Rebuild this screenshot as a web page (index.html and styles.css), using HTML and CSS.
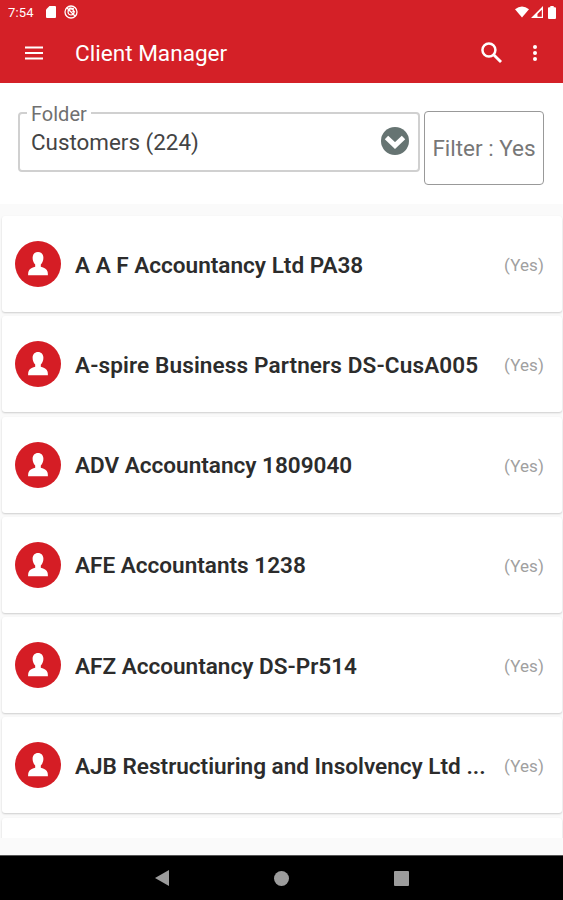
FILE: index.html
```
<!DOCTYPE html>
<html lang="en">
<head>
    <meta charset="UTF-8">
    <meta name="viewport" content="width=device-width, initial-scale=1.0">
    <title>Client Manager</title>
    <link rel="stylesheet" href="styles.css">
</head>
<body>
    <!-- Person icon shared by all rows -->
    <svg class="defs" width="0" height="0">
        <symbol id="person" viewBox="0 0 46 46">
            <circle cx="23" cy="23" r="23" fill="#d51d25"/>
            <path fill="#fff" d="M23 11c-3.300 0-5.400 2.400-5.400 5.800 0 2.900 1 5.200 2.600 6.600v2.400c-3.300.9-6 2.400-6.700 4.600-.3 1-.4 2.600-.4 3.800h19.800c0-1.200-.1-2.800-.4-3.800-.7-2.200-3.400-3.700-6.700-4.600v-2.400c1.600-1.400 2.600-3.700 2.600-6.600 0-3.400-2.100-5.800-5.400-5.800z"/>
        </symbol>
    </svg>

    <div class="screen">
        <header class="header">
            <div class="status">
                <span class="time">7:54</span>
                <svg class="sd" width="10" height="12" viewBox="0 0 10 12"><path fill="#fff" d="M3.500 0H9a1 1 0 0 1 1 1v10a1 1 0 0 1-1 1H1a1 1 0 0 1-1-1V3.500z"/></svg>
                <svg class="sync" width="14" height="14" viewBox="0 0 14 14" fill="none" stroke="#fff"><circle cx="7" cy="7" r="6" stroke-width="1.300"/><circle cx="7" cy="7" r="3" stroke-width="1.200"/><path stroke-width="1.300" d="M3 3l8 8M4 6l2-3 4 1M8 6l3 1"/></svg>
                <span class="spacer"></span>
                <svg class="wifi" width="14" height="12" viewBox="0 0 15 12"><path fill="#fff" d="M0 3Q7.500-3 15 3L7.500 12z"/></svg>
                <svg class="signal" width="12" height="12" viewBox="0 0 13 13"><path fill="#fff" fill-rule="evenodd" d="M13 0v13H0zM11.700 4L7 8.700v3h4.700z"/></svg>
                <svg class="battery" width="8" height="13" viewBox="0 0 8 13"><path fill="#fff" d="M2.300 0h3.400v1.300H7a1 1 0 0 1 1 1V12a1 1 0 0 1-1 1H1a1 1 0 0 1-1-1V2.300a1 1 0 0 1 1-1h1.300z"/></svg>
            </div>
            <div class="toolbar">
                <svg class="menu" width="18" height="14" viewBox="0 0 18 14"><path stroke="#fff" stroke-width="1.900" d="M0 1.500h18M0 7h18M0 12.500h18"/></svg>
                <h1>Client Manager</h1>
                <svg class="search" width="21" height="21" viewBox="0 0 22 22" fill="none" stroke="#fff"><circle cx="8.300" cy="8.300" r="6.800" stroke-width="2.600"/><path stroke-width="3" d="M13 13l8 8"/></svg>
                <svg class="more" width="4" height="16" viewBox="0 0 4 16" fill="#fff"><circle cx="2" cy="2" r="2"/><circle cx="2" cy="8" r="2"/><circle cx="2" cy="14" r="2"/></svg>
            </div>
        </header>

        <section class="filters">
            <fieldset class="folder">
                <legend>Folder</legend>
                <span>Customers (224)</span>
                <svg width="28" height="28" viewBox="0 0 28 28"><circle cx="14" cy="14" r="14" fill="#667472"/><path fill="none" stroke="#fff" stroke-width="5" d="M5.500 10.500l8.500 8 8.500-8"/></svg>
            </fieldset>
            <button class="filter" type="button">Filter : Yes</button>
        </section>

        <main class="list">
            <div class="card"><svg class="avatar"><use href="#person"/></svg><span class="name">A A F Accountancy Ltd PA38</span><span class="flag">(Yes)</span></div>
            <div class="card"><svg class="avatar"><use href="#person"/></svg><span class="name wide">A-spire Business Partners DS-CusA005</span><span class="flag">(Yes)</span></div>
            <div class="card"><svg class="avatar"><use href="#person"/></svg><span class="name">ADV Accountancy 1809040</span><span class="flag">(Yes)</span></div>
            <div class="card"><svg class="avatar"><use href="#person"/></svg><span class="name">AFE Accountants 1238</span><span class="flag">(Yes)</span></div>
            <div class="card"><svg class="avatar"><use href="#person"/></svg><span class="name">AFZ Accountancy DS-Pr514</span><span class="flag">(Yes)</span></div>
            <div class="card"><svg class="avatar"><use href="#person"/></svg><span class="name">AJB Restructiuring and Insolvency Ltd ...</span><span class="flag">(Yes)</span></div>
            <div class="card"></div>
        </main>

        <nav class="navbar">
            <svg width="14" height="16" viewBox="0 0 14 16"><path fill="#9c9c9c" d="M14 0v16L0 8z"/></svg>
            <svg width="15" height="15" viewBox="0 0 15 15"><circle cx="7.500" cy="7.500" r="7.500" fill="#9c9c9c"/></svg>
            <svg width="15" height="15" viewBox="0 0 15 15"><rect width="15" height="15" rx="1" fill="#9c9c9c"/></svg>
        </nav>
    </div>
</body>
</html>
```
FILE: styles.css
```
* {
    box-sizing: border-box;
}
body {
    margin: 0;
    font-family: Roboto, "Liberation Sans", sans-serif;
    background: #fafafa;
}
svg {
    display: block;
    flex-shrink: 0;
}
.defs {
    position: absolute;
}
.screen {
    display: flex;
    flex-direction: column;
    height: 900px;
    overflow: hidden;
}

/* Red header */
.header {
    height: 83px;
    background: #d42027;
    color: #fff;
}
.status {
    display: flex;
    align-items: center;
    height: 24px;
    padding: 0 7px 0 8px;
}
.time {
    width: 38px;
    font-size: 13px;
    letter-spacing: 0.2px;
}
.sync {
    margin-left: 8px;
}
.spacer {
    flex: 1;
}
.signal {
    margin-left: 2px;
}
.battery {
    margin-left: 5px;
}
.toolbar {
    display: flex;
    align-items: center;
    height: 58px;
    padding: 0 26px 0 25px;
}
h1 {
    flex: 1;
    margin: 1px 0 0 32px;
    font-size: 22.600px;
    font-weight: 400;
    line-height: 28px;
}
.search {
    margin-top: -1px;
}
.more {
    margin-left: 31px;
}

/* Folder and filter boxes */
.filters {
    display: flex;
    align-items: flex-start;
    height: 121px;
    padding: 20px 19px 0 18px;
    background: #fff;
}
.folder {
    display: flex;
    align-items: flex-start;
    justify-content: space-between;
    width: 402px;
    height: 70px;
    min-width: 0;
    margin: -1px 0 0;
    padding: 3px 9px 0 11px;
    border: 2px solid #d0d0d0;
    border-radius: 4px;
    color: #444;
    font-size: 22.400px;
    line-height: 30px;
}
.folder legend {
    margin-left: -4px;
    padding: 2px 4px 0;
    color: #707070;
    font-size: 20px;
    line-height: 20px;
}
.filter {
    width: 120px;
    height: 74px;
    margin: 8px 0 0 4px;
    padding: 0;
    border: 1px solid #999;
    border-radius: 4px;
    background: #fff;
    color: #777;
    font-family: inherit;
    font-size: 22.500px;
}

/* Client rows */
.list {
    height: 634px;
    padding: 12px 1px 0 2px;
    overflow: hidden;
}
.card {
    display: flex;
    align-items: center;
    height: 96px;
    margin-bottom: 4.300px;
    padding: 0 18px 0 13.400px;
    background: #fff;
    border-radius: 3px;
    box-shadow: 0 1px 2px rgba(0, 0, 0, 0.18);
}
.avatar {
    width: 46px;
    height: 46px;
}
.name {
    flex: 1;
    margin: 2px 0 0 13.600px;
    color: #2c2c2c;
    font-size: 22.550px;
    font-weight: 600;
    white-space: nowrap;
}
.wide {
    letter-spacing: 0.120px;
}
.flag {
    margin-top: 2px;
    color: #a0a0a0;
    font-size: 17px;
    letter-spacing: 0.1px;
}

/* Android navigation */
.navbar {
    display: flex;
    align-items: center;
    justify-content: center;
    gap: 105px;
    height: 45px;
    margin-top: 17px;
    background: #000;
    border-top: 1px solid #555;
}
```
